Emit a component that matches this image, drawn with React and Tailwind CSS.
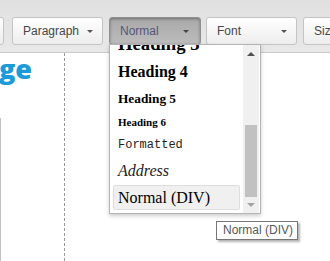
import React from "react";

function Caret({ color = "#555" }) {
  return (
    <span
      className="inline-block w-0 h-0 border-l-[3px] border-r-[3px] border-t-[3px] border-l-transparent border-r-transparent"
      style={{ borderTopColor: color }}
    />
  );
}

function Btn({ label, w, pressed, className = "" }) {
  return (
    <div
      className={`h-[28px] box-border flex items-center justify-between pl-[10px] pr-[9px] rounded-[3px] border shrink-0 text-[12px] ${className} ${
        pressed
          ? "border-[#8f8f8f] bg-gradient-to-b from-[#a9a9a9] to-[#bcbcbc] text-[#56567a] shadow-[inset_0_1px_3px_rgba(0,0,0,0.35)]"
          : "border-[#c4c4c4] bg-gradient-to-b from-[#ffffff] to-[#ededed] text-[#474747]"
      }`}
      style={{ width: w, fontFamily: '"Liberation Sans", Arial, sans-serif' }}
    >
      <span>{label}</span>
      <Caret color={pressed ? "#444" : "#555"} />
    </div>
  );
}

export default function App() {
  const serif = { fontFamily: '"Liberation Serif", "Times New Roman", serif' };
  return (
    <div className="relative w-[330px] h-[261px] overflow-hidden bg-white">
      {/* toolbar */}
      <div className="h-[53px] box-border border-b border-[#c9c9c9] bg-gradient-to-b from-[#e0e0e0] to-[#e8e8e8] flex items-start pt-[17px] overflow-hidden">
        <Btn label="" w={40} className="-ml-[36px]" />
        <Btn label="Paragraph" w={91} className="ml-[8px]" />
        <Btn label="Normal" w={92} pressed className="ml-[6px] pr-[11px]" />
        <Btn label="Font" w={91} className="ml-[5px]" />
        <Btn label="Size" w={60} className="ml-[6px]" />
      </div>

      {/* body */}
      <div className="flex h-[208px]">
        <div className="w-[65px] box-border border-r border-dashed border-[#9a9a9a] flex flex-col">
          <div
            className="pt-[3px] -ml-[1px] text-[27px] leading-[26px] font-extrabold text-[#1b9bd8]"
            style={{ fontFamily: '"Open Sans", Arial, sans-serif' }}
          >
            ge
          </div>
          <div className="mt-[36px] flex-1 border-l border-[#c3c3c3]" />
        </div>
        <div className="flex-1" />
      </div>

      {/* dropdown panel */}
      <div className="absolute left-[109px] top-[44px] w-[152px] h-[170px] box-border border border-[#b4b4b4] bg-white shadow-[0_2px_4px_rgba(0,0,0,0.2)] flex overflow-hidden">
        <div className="flex-1 overflow-hidden">
          <div className="-mt-[15px] flex flex-col text-black" style={serif}>
            <div className="mx-[3px] pl-[5px] h-[28px] leading-[28px] text-[18.7px] font-bold whitespace-nowrap">Heading 3</div>
            <div className="mx-[3px] pl-[5px] h-[28px] leading-[28px] text-[16px] font-bold whitespace-nowrap">Heading 4</div>
            <div className="mx-[3px] pl-[5px] h-[25px] leading-[25px] text-[13.3px] font-bold whitespace-nowrap">Heading 5</div>
            <div className="mx-[3px] pl-[5px] h-[23px] leading-[23px] text-[11px] font-bold whitespace-nowrap">Heading 6</div>
            <div
              className="mx-[3px] pl-[5px] h-[23px] leading-[23px] text-[12px] text-[#222] whitespace-nowrap"
              style={{ fontFamily: '"Liberation Mono", "Courier New", monospace' }}
            >
              Formatted
            </div>
            <div className="mx-[3px] pl-[5px] h-[27px] leading-[27px] text-[16px] italic text-[#222] whitespace-nowrap">Address</div>
            <div className="mx-[3px] mt-[1px] pl-[4px] h-[25px] box-border border border-[#dedede] rounded-[2px] bg-[#f0f0f0] leading-[24px] text-[16px] whitespace-nowrap">
              Normal (DIV)
            </div>
          </div>
        </div>
        {/* scrollbar */}
        <div className="w-[16px] mr-[1px] bg-[#f0f0f0] flex flex-col">
          <div className="h-[17px] flex items-center justify-center">
            <span className="inline-block w-0 h-0 border-l-[4px] border-r-[4px] border-b-[4px] border-l-transparent border-r-transparent border-b-[#505050]" />
          </div>
          <div className="h-[63px]" />
          <div className="h-[72px] mx-[2px] bg-[#c1c1c1]" />
          <div className="flex-1 flex items-center justify-center">
            <span className="inline-block w-0 h-0 border-l-[4px] border-r-[4px] border-t-[4px] border-l-transparent border-r-transparent border-t-[#a3a3a3]" />
          </div>
        </div>
      </div>

      {/* tooltip */}
      <div
        className="absolute left-[216px] top-[221px] w-[82px] h-[19px] box-border border border-[#767676] bg-white shadow-[2px_2px_2px_rgba(0,0,0,0.3)] pl-[6px] text-[12px] leading-[17px] text-[#575757] whitespace-nowrap"
        style={{ fontFamily: '"Liberation Sans", Arial, sans-serif' }}
      >
        Normal (DIV)
      </div>
    </div>
  );
}
